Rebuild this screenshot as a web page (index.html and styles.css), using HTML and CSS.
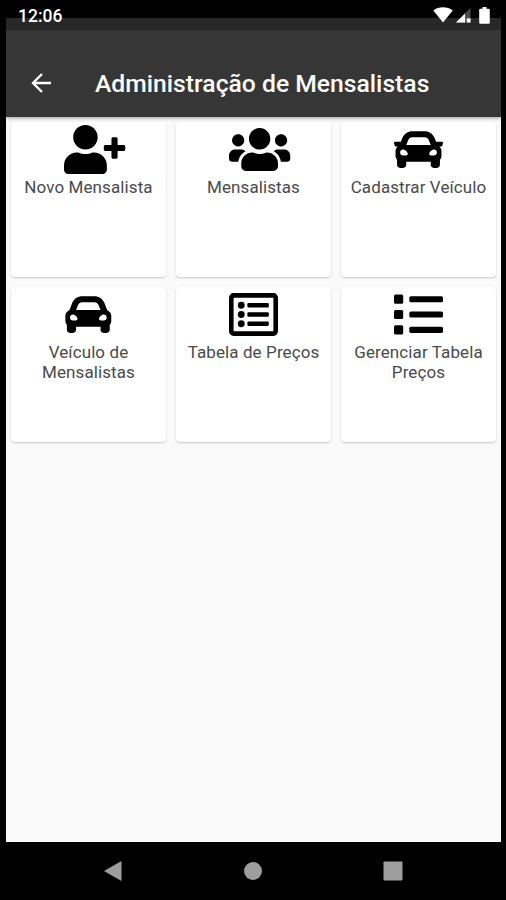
FILE: index.html
```html
<!DOCTYPE html>
<html lang="pt-BR">
<head>
  <meta charset="UTF-8">
  <meta name="viewport" content="width=device-width, initial-scale=1.0">
  <title>Administração de Mensalistas</title>
  <link rel="stylesheet" href="styles.css">
</head>
<body>
  <div class="status-bar">
    <span class="hora">12:06</span>
    <div class="status-icons">
      <svg class="wifi" width="20" height="16" viewBox="0 0 20 16"><path d="M0.3 3.4C5.5-.7 14.5-.7 19.7 3.4L10 15.4z"/></svg>
      <svg class="sinal" width="15" height="16" viewBox="0 0 15 16"><path d="M14.5 1v14.5H0z" opacity=".3"/><path d="M9 6.5v9H0z"/><path d="M11 11.5h3.5v4H11z"/></svg>
      <svg class="bateria" width="11" height="17" viewBox="0 0 11 17"><path d="M3.5 0h4v1.7h2q1.3 0 1.3 1.3v12.5q0 1.3-1.3 1.3h-8Q.2 16.8.2 15.5V3q0-1.3 1.3-1.3h2z"/></svg>
    </div>
  </div>

  <div class="app">
    <header class="header">
      <svg class="voltar" width="21" height="20" viewBox="0 0 21 20"><path d="M20 10H2M11 1L2 10l9 9"/></svg>
      <h1>Administração de Mensalistas</h1>
    </header>

    <main class="menu">
      <div class="card">
        <svg class="icone" viewBox="0 0 512 512"><path d="M624 208h-64v-64c0-8.8-7.2-16-16-16h-32c-8.8 0-16 7.2-16 16v64h-64c-8.8 0-16 7.2-16 16v32c0 8.8 7.2 16 16 16h64v64c0 8.8 7.2 16 16 16h32c8.8 0 16-7.2 16-16v-64h64c8.8 0 16-7.2 16-16v-32c0-8.8-7.2-16-16-16zm-400 48c70.7 0 128-57.3 128-128S294.7 0 224 0 96 57.3 96 128s57.3 128 128 128zm89.6 32h-16.7c-22.2 10.2-46.9 16-72.9 16s-50.6-5.8-72.9-16h-16.7C60.2 288 0 348.2 0 422.4V464c0 26.5 21.5 48 48 48h352c26.5 0 48-21.5 48-48v-41.6c0-74.2-60.2-134.4-134.4-134.4z"/></svg>
        <p>Novo Mensalista</p>
      </div>
      <div class="card">
        <svg class="icone" viewBox="0 0 512 512"><path d="M96 224c35.3 0 64-28.7 64-64s-28.7-64-64-64-64 28.7-64 64 28.7 64 64 64zm448 0c35.3 0 64-28.7 64-64s-28.7-64-64-64-64 28.7-64 64 28.7 64 64 64zm32 32h-64c-17.6 0-33.5 7.1-45.1 18.6 40.3 22.1 68.9 62 75.1 109.4h66c17.7 0 32-14.3 32-32v-32c0-35.3-28.7-64-64-64zm-256 0c61.9 0 112-50.1 112-112S381.9 32 320 32 208 82.1 208 144s50.1 112 112 112zm76.8 32h-8.3c-20.8 10-43.9 16-68.5 16s-47.6-6-68.5-16h-8.3C179.6 288 128 339.6 128 403.2V432c0 26.5 21.5 48 48 48h288c26.5 0 48-21.5 48-48v-28.8c0-63.6-51.6-115.2-115.2-115.2zm-223.7-13.4C161.5 263.1 145.6 256 128 256H64c-35.3 0-64 28.7-64 64v32c0 17.7 14.3 32 32 32h65.9c6.3-47.4 34.9-87.3 75.2-109.4z"/></svg>
        <p>Mensalistas</p>
      </div>
      <div class="card">
        <svg class="icone" viewBox="0 0 512 512"><path d="M499.99 176h-59.87l-16.64-41.6C406.38 91.63 365.57 64 319.5 64h-127c-46.06 0-86.88 27.63-103.99 70.4L71.87 176H12.01C4.2 176-1.53 183.34.37 190.91l6 24C7.7 220.25 12.5 224 18.01 224h20.07C24.65 235.73 16 252.78 16 272v48c0 16.12 6.16 30.67 16 41.93V416c0 17.67 14.33 32 32 32h32c17.67 0 32-14.33 32-32v-32h256v32c0 17.67 14.33 32 32 32h32c17.67 0 32-14.33 32-32v-54.07c9.84-11.25 16-25.8 16-41.93v-48c0-19.22-8.65-36.27-22.07-48H494c5.51 0 10.31-3.75 11.64-9.09l6-24c1.89-7.57-3.84-14.91-11.65-14.91zm-352.06-17.83c7.29-18.22 24.94-30.17 44.57-30.17h127c19.63 0 37.28 11.95 44.57 30.17L384 208H128l19.93-49.83zM96 319.8c-19.2 0-32-12.76-32-31.9S76.8 256 96 256s48 28.71 48 47.85-28.8 15.95-48 15.95zm320 0c-19.2 0-48 3.19-48-15.95S396.8 256 416 256s32 12.76 32 31.9-12.8 31.9-32 31.9z"/></svg>
        <p>Cadastrar Veículo</p>
      </div>
      <div class="card">
        <svg class="icone" viewBox="-14 0 512 512"><path d="M438.66 212.33l-11.24-28.1-19.93-49.83C390.38 91.63 349.57 64 303.5 64h-127c-46.06 0-86.88 27.63-103.99 70.4l-19.93 49.83-11.24 28.1C17.22 221.5 0 244.66 0 272v48c0 16.12 6.16 30.67 16 41.93V416c0 17.67 14.33 32 32 32h32c17.67 0 32-14.33 32-32v-32h256v32c0 17.67 14.33 32 32 32h32c17.67 0 32-14.33 32-32v-54.07c9.84-11.25 16-25.8 16-41.93v-48c0-27.34-17.22-50.5-41.34-59.67zm-306.73-54.16c7.29-18.22 24.94-30.17 44.57-30.17h127c19.63 0 37.28 11.95 44.57 30.17L368 208H112l19.93-49.83zM80 319.8c-19.2 0-32-12.76-32-31.9S60.8 256 80 256s48 28.71 48 47.85-28.8 15.95-48 15.95zm320 0c-19.2 0-48 3.19-48-15.95S380.8 256 400 256s32 12.76 32 31.9-12.8 31.9-32 31.9z"/></svg>
        <p>Veículo de Mensalistas</p>
      </div>
      <div class="card">
        <svg class="icone" viewBox="0 0 512 512">
          <rect x="24" y="56" width="464" height="400" rx="24" fill="none" stroke="#000" stroke-width="48"/>
          <circle cx="128" cy="160" r="36"/><rect x="192" y="136" width="224" height="48" rx="12"/>
          <circle cx="128" cy="256" r="36"/><rect x="192" y="232" width="224" height="48" rx="12"/>
          <circle cx="128" cy="352" r="36"/><rect x="192" y="328" width="224" height="48" rx="12"/>
        </svg>
        <p>Tabela de Preços</p>
      </div>
      <div class="card">
        <svg class="icone" viewBox="0 0 512 512">
          <rect x="0" y="48" width="96" height="96" rx="16"/><rect x="160" y="64" width="352" height="64" rx="16"/>
          <rect x="0" y="208" width="96" height="96" rx="16"/><rect x="160" y="224" width="352" height="64" rx="16"/>
          <rect x="0" y="368" width="96" height="96" rx="16"/><rect x="160" y="384" width="352" height="64" rx="16"/>
        </svg>
        <p>Gerenciar Tabela Preços</p>
      </div>
    </main>
  </div>

  <nav class="nav-bar">
    <svg width="20" height="22" viewBox="0 0 20 22"><path d="M18.5 1v20L1 11z"/></svg>
    <svg width="20" height="22" viewBox="0 0 20 22"><circle cx="10" cy="11" r="9"/></svg>
    <svg width="20" height="22" viewBox="0 0 20 22"><rect x=".5" y="1.5" width="19" height="19" rx="1"/></svg>
  </nav>
</body>
</html>
```
FILE: styles.css
```css
/* Reset CSS */
* {
  margin: 0;
  padding: 0;
  box-sizing: border-box;
}

body {
  font-family: Roboto, sans-serif;
  background-color: #000;
  height: 900px;
  display: flex;
  flex-direction: column;
  overflow: hidden;
}

/* Barra de status, por cima do app */
.status-bar {
  position: absolute;
  top: 0;
  left: 0;
  width: 100%;
  height: 30px;
  padding: 7px 16px 0 18px;
  display: flex;
  justify-content: space-between;
  color: #fff;
}

.hora {
  font-size: 17.5px;
  font-weight: 500;
  line-height: 19px;
}

.status-icons {
  display: flex;
  fill: #fff;
}

.sinal {
  margin: 0 8px 0 3px;
}

/* Area do aplicativo */
.app {
  height: 824px;
  margin: 18px 5px 0 6px;
  background-color: #fafafa;
}

.header {
  height: 99px;
  padding: 19px 0 0 25px;
  display: flex;
  align-items: center;
  gap: 43px;
  background-color: #363636;
  border-top: 12px solid #282828;
  box-shadow: 0 1px 4px rgba(0, 0, 0, 0.4);
  color: #fff;
}

.voltar {
  fill: none;
  stroke: #fff;
  stroke-width: 2.4;
}

.header h1 {
  padding-top: 2px;
  font-size: 24.7px;
  font-weight: 500;
  line-height: 30px;
  white-space: nowrap;
}

/* Grade de botoes */
.menu {
  display: grid;
  grid-template-columns: repeat(3, 155px);
  grid-auto-rows: 155px;
  gap: 10px;
  padding: 5px;
}

.card {
  padding: 2.5px 8px 0;
  display: flex;
  flex-direction: column;
  align-items: center;
  background-color: #fff;
  border-radius: 4px;
  box-shadow: 0 1px 2px rgba(0, 0, 0, 0.2);
}

.icone {
  width: 49px;
  height: 49px;
  flex-shrink: 0;
  overflow: visible;
}

.card p {
  margin-top: 3.4px;
  font-size: 17px;
  line-height: 20px;
  letter-spacing: 0.1px;
  text-align: center;
  color: #4a4a4a;
}

/* Botoes do sistema */
.nav-bar {
  flex: 1;
  display: flex;
  justify-content: center;
  align-items: center;
  gap: 120px;
  fill: #9e9e9e;
}
```
